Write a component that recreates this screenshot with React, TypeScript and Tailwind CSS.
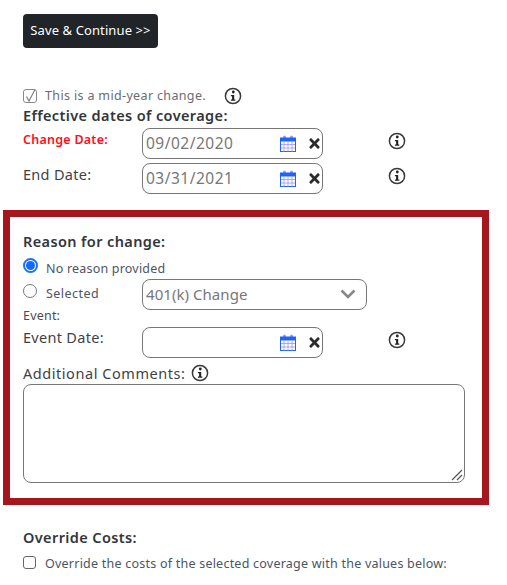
import { FaTimes } from 'react-icons/fa';

const font = "font-['Noto_Sans',sans-serif]";

function InfoIcon({ size = 18 }: { size?: number }) {
  return (
    <svg width={size} height={size} viewBox="0 0 18 18" className="shrink-0">
      <circle cx="9" cy="9" r="7.6" fill="none" stroke="#3a3a3a" strokeWidth="1.5" />
      <circle cx="9.3" cy="5" r="1.4" fill="#222" />
      <path d="M6.9 8h3.3v4.6h1.1v1.2H6.9v-1.2h1.2V9.2H6.9z" fill="#222" />
    </svg>
  );
}

function CalendarIcon() {
  return (
    <svg width="16" height="17" viewBox="0 0 16 17" className="shrink-0">
      <rect x="3" y="0.5" width="3" height="5" rx="1.5" fill="#8f9bff" />
      <rect x="10" y="0.5" width="3" height="5" rx="1.5" fill="#8f9bff" />
      <rect x="0.5" y="3" width="15" height="13.5" fill="#fff" stroke="#1f62ff" />
      <rect x="0.5" y="3" width="15" height="3.5" fill="#1f62ff" />
      <path d="M4 6.5v10M8 6.5v10M12 6.5v10M1 9.5h14M1 13h14" stroke="#a9a6ff" strokeWidth="1" fill="none" />
    </svg>
  );
}

function DateField({ value }: { value?: string }) {
  return (
    <div className="flex h-[31px] w-[181px] items-center rounded-lg border border-[#777] pl-[3px]">
      <span className="flex-1 text-[15.5px] tracking-[0.5px] text-[#777]">{value}</span>
      <CalendarIcon />
      <FaTimes className="ml-[11px] text-[15px] text-[#2b2b2b]" />
    </div>
  );
}

function DateRow({ label, value, labelClass }: { label: string; value?: string; labelClass: string }) {
  return (
    <div className="flex items-start">
      <span className={`w-[119px] ${labelClass}`}>{label}</span>
      <DateField value={value} />
      <span className="ml-[65px] mt-[4px]">
        <InfoIcon />
      </span>
    </div>
  );
}

export default function App() {
  const label = 'text-[14.5px] leading-[20px] tracking-[0.3px] text-[#3f3f46]';
  const heading = 'text-[14.5px] font-semibold leading-[20px] tracking-[0.38px] text-[#33363b]';
  return (
    <div className={`${font} h-[585px] w-[507px] overflow-hidden bg-white`}>
      <div className="pl-[23px] pt-[14px]">
        <button className="h-[34px] w-[135px] rounded bg-[#212529] text-[13px] tracking-[0.1px] text-white">
          Save &amp; Continue &gt;&gt;
        </button>

        <div className="mt-[39px] flex items-center">
          <span className="flex h-[14px] w-[14px] items-center justify-center rounded-[3px] border border-[#8a8a8a]">
            <svg width="14" height="14" viewBox="0 0 14 14" className="shrink-0">
              <path d="M3.5 7.5 6 12 12 0.5" fill="none" stroke="#7a7a7a" strokeWidth="1.1" />
            </svg>
          </span>
          <span className="ml-[8px] text-[12.5px] tracking-[0.35px] text-[#6b6b75]">This is a mid-year change.</span>
          <span className="ml-[18px]">
            <InfoIcon />
          </span>
        </div>
        <h3 className={`mt-[-1px] ${heading}`}>Effective dates of coverage:</h3>
        <div className="mt-[3px] flex flex-col gap-[4px]">
          <DateRow
            label="Change Date:"
            value="09/02/2020"
            labelClass="pt-[1px] text-[12.5px] font-semibold leading-[22px] tracking-[0.25px] text-[#ff0d1d]"
          />
          <DateRow label="End Date:" value="03/31/2021" labelClass={`pt-[1px] ${label}`} />
        </div>
      </div>

      <div className="ml-[3px] mt-[16px] h-[295px] w-[486px] border-[7px] border-[#a6161f] pl-[13px] pt-[14px]">
        <h3 className={heading}>Reason for change:</h3>
        <div className="mt-[5px] flex h-[20px] items-center">
          <span className="flex h-[15px] w-[15px] items-center justify-center rounded-full border-2 border-[#1673ff]">
            <span className="h-[9px] w-[9px] rounded-full bg-[#0f6bff]" />
          </span>
          <span className="ml-[8px] mt-[8px] text-[12.5px] tracking-[0.2px] text-[#4b5563]">No reason provided</span>
        </div>
        <div className="mt-[3px] flex items-start">
          <span className="mt-[5px] h-[14px] w-[14px] rounded-full border border-[#777]" />
          <span className="ml-[9px] mt-[6px] w-[96px] text-[12.5px] tracking-[0.45px] text-[#4b5563]">Selected</span>
          <div className="flex h-[31px] w-[225px] items-center justify-between rounded-lg border border-[#777] pl-[3px] pr-[10px]">
            <span className="text-[15px] tracking-[0.05px] text-[#777]">401(k) Change</span>
            <svg width="16" height="10" viewBox="0 0 16 10">
              <path d="M1.5 1.5 8 8l6.5-6.5" fill="none" stroke="#888" strokeWidth="2.6" />
            </svg>
          </div>
        </div>
        <div className="mt-[-2px] text-[12.5px] leading-[16px] tracking-[0.2px] text-[#4b4b4b]">Event:</div>
        <div className="mt-[3px]">
          <DateRow label="Event Date:" labelClass={label} />
        </div>
        <div className="mt-[3px] flex h-[24px] items-center">
          <span className="text-[14.5px] leading-[20px] tracking-[0.55px] text-[#3f3f46]">Additional Comments:</span>
          <span className="ml-[6px]">
            <InfoIcon />
          </span>
        </div>
        <div className="relative mt-[-1px] h-[99px] w-[442px] rounded-lg border border-[#777]">
          <svg width="12" height="12" viewBox="0 0 12 12" className="absolute bottom-[1px] right-[1px]">
            <path d="M1 11 11 1M6 11l5-5" stroke="#555" strokeWidth="1.2" fill="none" />
          </svg>
        </div>
      </div>

      <div className="pl-[23px] pt-[22px]">
        <h3 className={heading}>Override Costs:</h3>
        <div className="mt-[6px] flex items-center">
          <span className="mb-[2px] h-[13px] w-[13px] rounded-[3px] border border-[#666]" />
          <span className="ml-[9px] mt-[2px] text-[12.5px] tracking-[0.23px] text-[#4b5563]">
            Override the costs of the selected coverage with the values below:
          </span>
        </div>
      </div>
    </div>
  );
}
